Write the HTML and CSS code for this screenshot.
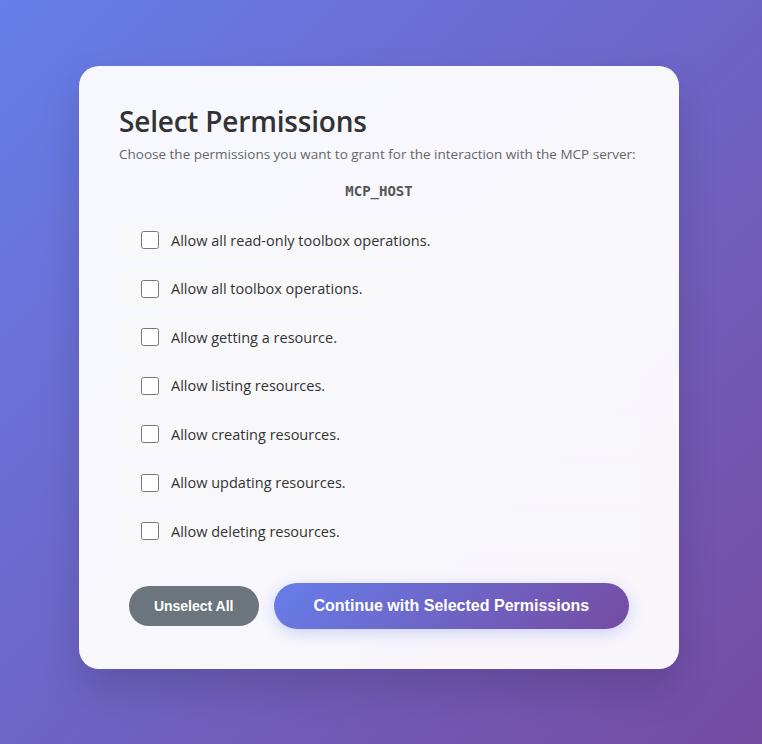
FILE: index.html
```html
<!DOCTYPE html>
<html lang="en">
<head>
<meta charset="utf-8">
<title>Select Permissions</title>
<link rel="stylesheet" href="styles.css">
</head>
<body>
<div class="card">
  <h1 class="title">Select Permissions</h1>
  <p class="subtitle">Choose the permissions you want to grant for the interaction with the MCP server:</p>
  <div class="host">MCP_HOST</div>
  <div class="list">
    <label class="row"><input type="checkbox" class="check"><span>Allow all read-only toolbox operations.</span></label>
    <label class="row"><input type="checkbox" class="check"><span>Allow all toolbox operations.</span></label>
    <label class="row"><input type="checkbox" class="check"><span>Allow getting a resource.</span></label>
    <label class="row"><input type="checkbox" class="check"><span>Allow listing resources.</span></label>
    <label class="row"><input type="checkbox" class="check"><span>Allow creating resources.</span></label>
    <label class="row"><input type="checkbox" class="check"><span>Allow updating resources.</span></label>
    <label class="row"><input type="checkbox" class="check"><span>Allow deleting resources.</span></label>
  </div>
  <div class="actions">
    <button class="btn btn-secondary">Unselect All</button>
    <button class="btn btn-primary">Continue with Selected Permissions</button>
  </div>
</div>
</body>
</html>
```
FILE: styles.css
```css
* { box-sizing: border-box; }
html, body { margin: 0; height: 100%; }
body {
  background: linear-gradient(135deg, #667eea 0%, #764ba2 100%);
  font-family: "Open Sans", "Noto Sans", sans-serif;
  display: flex;
  justify-content: center;
  align-items: flex-start;
  padding: 66px 4px 0 0;
}
.card {
  width: 600px;
  background: rgba(255, 255, 255, 0.95);
  border-radius: 20px;
  padding: 40px;
  box-shadow: 0 20px 40px rgba(0, 0, 0, 0.15);
}
.title {
  margin: 0 0 8px;
  font-size: 28px;
  font-weight: 600;
  color: #333;
  line-height: 30px;
  letter-spacing: -0.2px;
}
.subtitle {
  margin: 0 0 17px;
  font-size: 13.5px;
  color: #666;
  line-height: 20px;
}
.host {
  text-align: center;
  font-family: "DejaVu Sans Mono", "Liberation Mono", monospace;
  font-weight: bold;
  font-size: 14px;
  color: #555;
  line-height: 20px;
  margin-bottom: 19px;
}
.list {
  display: flex;
  flex-direction: column;
  gap: 8.5px;
}
.row {
  display: flex;
  align-items: center;
  gap: 12px;
  height: 40px;
  padding: 0 22px;
  background: rgba(248, 249, 250, 0.6);
  border-radius: 8px;
  font-size: 14.5px;
  color: #333;
}
.check {
  width: 18px;
  height: 18px;
  margin: 0;
  flex: none;
}
.actions {
  display: flex;
  justify-content: center;
  align-items: center;
  gap: 15px;
  margin-top: 32px;
}
.btn {
  border: none;
  border-radius: 25px;
  font-family: "Liberation Sans", Arial, sans-serif;
  font-weight: bold;
  color: #fff;
  cursor: pointer;
}
.btn-secondary {
  background: #6c757d;
  font-size: 14px;
  height: 40px;
  padding: 0 25px;
}
.btn-primary {
  background: linear-gradient(135deg, #667eea 0%, #764ba2 100%);
  font-size: 16px;
  height: 46px;
  padding: 0 40px;
  box-shadow: 0 4px 15px rgba(102, 126, 234, 0.3);
}
```
